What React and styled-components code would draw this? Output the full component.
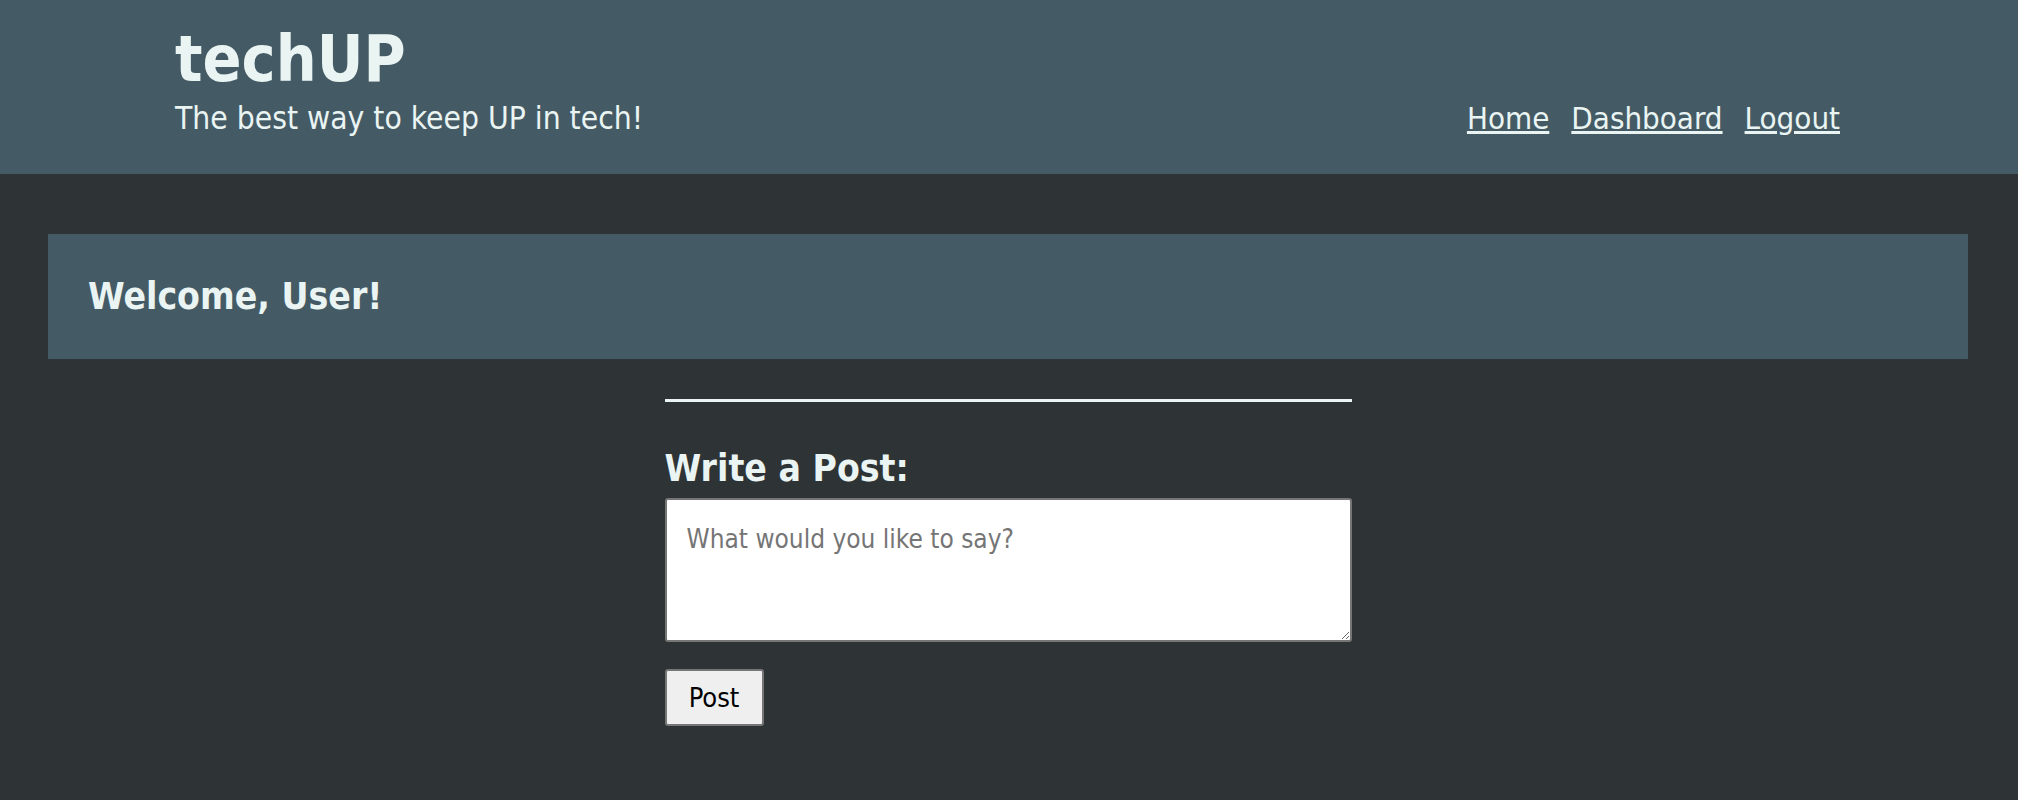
import React from 'react';
import styled, { createGlobalStyle } from 'styled-components';

const GlobalStyle = createGlobalStyle`
    body{
        margin: 0;
        background: #2e3335;
        font-family: "DejaVu Sans Condensed", "DejaVu Sans", sans-serif;
        color: #eaf4f2;
    }
`;

const Header = styled.header`
    background: #445b66;
    height: 174px;
    box-sizing: border-box;
    padding: 19px 178px 0 175px;
    display: flex;
    justify-content: space-between;
    align-items: flex-start;
`;

const Brand = styled.div`
    display: flex;
    flex-direction: column;
`;

const Logo = styled.h1`
    margin: 0;
    font-size: 64px;
    line-height: 80px;
    font-weight: bold;
`;

const Tagline = styled.p`
    margin: 1px 0 0;
    font-size: 31.5px;
    line-height: 36px;
`;

const Nav = styled.nav`
    display: flex;
    gap: 22px;
    margin-top: 81px;
`;

const NavLink = styled.a`
    color: #eaf4f2;
    font-size: 31px;
    line-height: 36px;
    text-decoration: underline;
`;

const Main = styled.main`
    padding: 60px 50px 0 48px;
`;

const Welcome = styled.section`
    background: #445b66;
    height: 125px;
    padding: 0 40px;
    display: flex;
    align-items: center;
`;

const WelcomeTitle = styled.h2`
    margin: 0;
    font-size: 37px;
    font-weight: bold;
`;

const Form = styled.form`
    width: 687px;
    margin: 40px auto 0;
    display: flex;
    flex-direction: column;
    align-items: flex-start;
`;

const Rule = styled.hr`
    width: 100%;
    margin: 0;
    border: none;
    height: 3px;
    background: #eaf4f2;
`;

const FormTitle = styled.h3`
    margin: 45px 0 8px;
    font-size: 37px;
    font-weight: bold;
`;

const TextArea = styled.textarea`
    width: 100%;
    height: 144px;
    box-sizing: border-box;
    border: 2px solid #767676;
    border-radius: 3px;
    padding: 24px 20px 10px;
    font-family: inherit;
    font-size: 26px;
    background: #fff;
    color: #000;

    &::placeholder{
        color: #757575;
    }
`;

const Button = styled.button`
    margin-top: 27px;
    width: 99px;
    height: 57px;
    background: #efefef;
    border: 2px solid #767676;
    border-radius: 3px;
    font-family: inherit;
    font-size: 27px;
    color: #000;
`;

const App = () => {
    return(
        <>
            <GlobalStyle />
            <Header>
                <Brand>
                    <Logo>techUP</Logo>
                    <Tagline>The best way to keep UP in tech!</Tagline>
                </Brand>
                <Nav>
                    <NavLink href="#">Home</NavLink>
                    <NavLink href="#">Dashboard</NavLink>
                    <NavLink href="#">Logout</NavLink>
                </Nav>
            </Header>
            <Main>
                <Welcome>
                    <WelcomeTitle>Welcome, User!</WelcomeTitle>
                </Welcome>
                <Form onSubmit={e => e.preventDefault()}>
                    <Rule />
                    <FormTitle>Write a Post:</FormTitle>
                    <TextArea placeholder="What would you like to say?" />
                    <Button type="submit">Post</Button>
                </Form>
            </Main>
        </>
    );
}

export default App;
